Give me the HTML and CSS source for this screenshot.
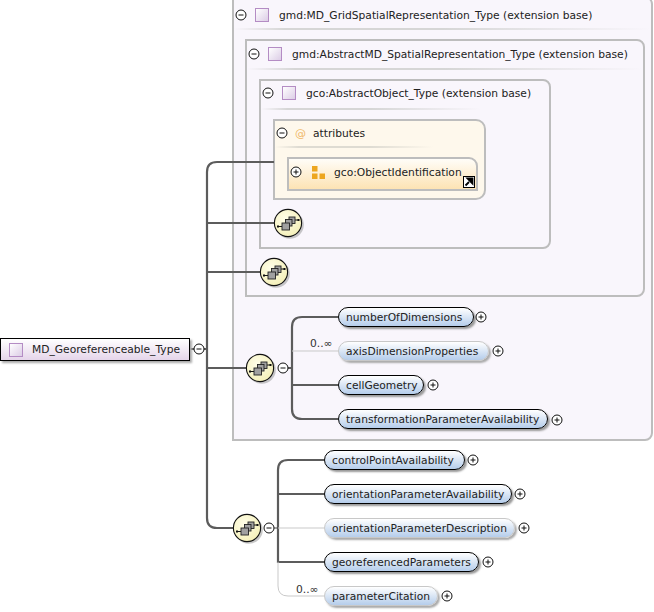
FILE: index.html
```html
<!DOCTYPE html>
<html lang="en">
<head>
<meta charset="utf-8">
<title>MD_Georeferenceable_Type</title>
<link rel="stylesheet" href="styles.css">
</head>
<body>
<svg width="0" height="0" class="defs">
  <defs>
    <radialGradient id="ball" cx="0.4" cy="0.35" r="0.75">
      <stop offset="0" stop-color="#fffee8"/>
      <stop offset="1" stop-color="#f3eeb4"/>
    </radialGradient>
    <symbol id="compositor" viewBox="0 0 32 32">
      <circle cx="16.800" cy="16.800" r="14" fill="#9a9a9a" opacity=".55"/>
      <circle cx="15" cy="15" r="13.600" fill="url(#ball)" stroke="#111" stroke-width="1.100"/>
      <path d="M5 18.500H9M21 12H25" stroke="#111" stroke-width="1"/>
      <rect x="4" y="17.500" width="2" height="2" fill="#111"/>
      <rect x="24.500" y="11" width="2" height="2" fill="#111"/>
      <rect x="16" y="9" width="6" height="6.500" fill="#a0a0a0" stroke="#222" stroke-width=".9"/>
      <rect x="12.500" y="11.500" width="6.500" height="6.500" fill="#a0a0a0" stroke="#222" stroke-width=".9"/>
      <rect x="9" y="15" width="7.500" height="7" fill="#a0a0a0" stroke="#222" stroke-width=".9"/>
    </symbol>
    <symbol id="minus" viewBox="0 0 12 12">
      <circle cx="6" cy="6" r="5" fill="#fff" stroke="#111" stroke-width="1"/>
      <path d="M3.500 6H8.500" stroke="#111" stroke-width="1"/>
    </symbol>
    <symbol id="plus" viewBox="0 0 12 12">
      <circle cx="6" cy="6" r="5" fill="#fff" stroke="#111" stroke-width="1"/>
      <path d="M3.500 6H8.500M6 3.500V8.500" stroke="#111" stroke-width="1"/>
    </symbol>
  </defs>
</svg>

<main class="diagram">
  <section class="panel panel-grid">
    <header class="head">
      <svg class="tog"><use href="#minus"/></svg>
      <span class="type-icon"></span>
      <span class="head-label">gmd:MD_GridSpatialRepresentation_Type (extension base)</span>
    </header>
    <div class="rule rule-grid"></div>
  </section>

  <section class="panel panel-abstract">
    <header class="head">
      <svg class="tog"><use href="#minus"/></svg>
      <span class="type-icon"></span>
      <span class="head-label">gmd:AbstractMD_SpatialRepresentation_Type (extension base)</span>
    </header>
    <div class="rule rule-abstract"></div>
  </section>

  <section class="panel panel-object">
    <header class="head">
      <svg class="tog"><use href="#minus"/></svg>
      <span class="type-icon"></span>
      <span class="head-label">gco:AbstractObject_Type (extension base)</span>
    </header>
    <div class="rule rule-object"></div>
  </section>

  <section class="attrs">
    <header class="attrs-head">
      <svg class="tog"><use href="#minus"/></svg>
      <span class="at">@</span>
      <span class="head-label">attributes</span>
    </header>
    <div class="rule rule-attrs"></div>
    <div class="attr-group">
      <svg class="tog"><use href="#plus"/></svg>
      <svg class="group-icon" viewBox="0 0 13 13"><path d="M0 0h5.500v5.500H0zM0 7.500h5.500v5.500H0zM7.500 7.500h5.500v5.500H7.500z" fill="#eda61f"/></svg>
      <span class="group-label">gco:ObjectIdentification</span>
      <svg class="ref-icon" viewBox="0 0 12 12"><rect x=".5" y=".5" width="11" height="11" fill="#fff" stroke="#000"/><path d="M2.500 9.500L6 6M4.500 2.500H9.500V7.500Z" stroke="#000" stroke-width="1.800" fill="#000"/></svg>
    </div>
  </section>

  <svg class="wires" viewBox="0 0 654 612">
    <g fill="none" stroke="#5c5c5c" stroke-width="2.200">
      <path d="M274 162H217Q207 162 207 172V518Q207 528 217 528H234"/>
      <path d="M207 223H275M207 272H261M207 368H247M190 349H207"/>
      <path d="M338 317H302Q292 317 292 327V409Q292 419 302 419H338M292 385H338M284 368H292"/>
      <path d="M324 460H288Q278 460 278 470V562H324M278 494H324"/>
    </g>
    <g fill="none" stroke="#c9c9c9" stroke-width="1">
      <path d="M292 351H338M278 528H324"/>
      <path d="M278 562V586Q278 596 288 596H324"/>
    </g>
    <path d="M270 528H278" stroke="#444" stroke-width="1"/>
  </svg>

  <div class="root">
    <span class="type-icon"></span>
    <span class="root-label">MD_Georeferenceable_Type</span>
  </div>

  <svg class="tog t-root"><use href="#minus"/></svg>
  <svg class="tog t-seq1"><use href="#minus"/></svg>
  <svg class="tog t-seq2"><use href="#minus"/></svg>

  <svg class="comp c1"><use href="#compositor"/></svg>
  <svg class="comp c2"><use href="#compositor"/></svg>
  <svg class="comp c3"><use href="#compositor"/></svg>
  <svg class="comp c4"><use href="#compositor"/></svg>

  <span class="card card-a">0..∞</span>
  <span class="card card-b">0..∞</span>

  <div class="pill p1">numberOfDimensions</div>
  <svg class="tog x1"><use href="#plus"/></svg>
  <div class="pill opt p2">axisDimensionProperties</div>
  <svg class="tog x2"><use href="#plus"/></svg>
  <div class="pill p3">cellGeometry</div>
  <svg class="tog x3"><use href="#plus"/></svg>
  <div class="pill p4">transformationParameterAvailability</div>
  <svg class="tog x4"><use href="#plus"/></svg>

  <div class="pill p5">controlPointAvailability</div>
  <svg class="tog x5"><use href="#plus"/></svg>
  <div class="pill p6">orientationParameterAvailability</div>
  <svg class="tog x6"><use href="#plus"/></svg>
  <div class="pill opt p7">orientationParameterDescription</div>
  <svg class="tog x7"><use href="#plus"/></svg>
  <div class="pill p8">georeferencedParameters</div>
  <svg class="tog x8"><use href="#plus"/></svg>
  <div class="pill opt p9">parameterCitation</div>
  <svg class="tog x9"><use href="#plus"/></svg>
</main>
</body>
</html>
```
FILE: styles.css
```css
html, body {
  margin: 0;
  padding: 0;
  background: #fff;
}

.defs {
  position: absolute;
}

.diagram {
  position: relative;
  width: 654px;
  height: 612px;
  overflow: hidden;
  font-family: "DejaVu Sans", "Open Sans", sans-serif;
  font-size: 10.7px;
  color: #222;
}

.diagram > * {
  position: absolute;
}

.panel {
  box-sizing: border-box;
  background: #f9f6fc;
  border: 2px solid #bdbdbd;
}

.panel-grid {
  left: 232px;
  top: -4px;
  width: 421px;
  height: 445px;
  border-radius: 0 8px 8px 0;
}

.panel-abstract {
  left: 245px;
  top: 39px;
  width: 400px;
  height: 258px;
  border-radius: 0 8px 8px 0;
}

.panel-object {
  left: 259px;
  top: 79px;
  width: 292px;
  height: 170px;
  border-radius: 0 8px 8px 0;
}

.head {
  display: flex;
  align-items: center;
  height: 20px;
  margin: 3px 0 0 1px;
}

.panel-grid .head {
  margin-top: 7px;
}

.panel-object .head {
  margin-top: 2px;
}

.tog {
  display: block;
  width: 12px;
  height: 12px;
  flex: none;
}

.type-icon {
  display: block;
  box-sizing: border-box;
  width: 14px;
  height: 14px;
  flex: none;
  border: 1px solid #b48cc4;
  background: linear-gradient(135deg, #fff, #dccde6);
}

.head .type-icon {
  margin-left: 8px;
}

.head-label {
  margin-left: 10px;
  white-space: nowrap;
}

.rule {
  height: 2px;
  margin-top: 4px;
  background: linear-gradient(90deg, #f9f6fc, #d6d6d6 12%, #d6d6d6 50%, #f9f6fc);
}

.rule-grid {
  margin-top: 3px;
}

.rule-object {
  width: 220px;
  margin-top: 5px;
}

.attrs {
  box-sizing: border-box;
  left: 273px;
  top: 119px;
  width: 213px;
  height: 81px;
  border: 2px solid #bdbdbd;
  border-radius: 0 10px 10px 0;
  background: #fef8ec;
}

.attrs-head {
  display: flex;
  align-items: center;
  height: 20px;
  margin: 2px 0 0 1px;
}

.at {
  margin-left: 7px;
  color: #f0b868;
  font-size: 11px;
}

.attrs-head .head-label {
  margin-left: 7px;
}

.rule-attrs {
  width: 158px;
  margin-top: 3px;
  background: linear-gradient(90deg, #fef8ec, #dedbd2 15%, #dedbd2 60%, #fef8ec);
}

.attr-group {
  position: relative;
  box-sizing: border-box;
  display: flex;
  align-items: center;
  width: 191px;
  height: 34px;
  margin: 9px 0 0 12px;
  padding: 0 0 4px 1px;
  border: 2px solid #bdbdbd;
  border-radius: 0 9px 0 0;
  background: linear-gradient(180deg, #fffdf8, #fde3b4);
}

.group-icon {
  display: block;
  width: 13px;
  height: 13px;
  margin-left: 10px;
}

.group-label {
  margin-left: 9px;
  white-space: nowrap;
}

.ref-icon {
  position: absolute;
  right: 1px;
  bottom: 1px;
  width: 12px;
  height: 12px;
}

.wires {
  left: 0;
  top: 0;
  width: 654px;
  height: 612px;
}

.root {
  box-sizing: border-box;
  display: flex;
  align-items: center;
  left: 0;
  top: 338px;
  width: 190px;
  height: 23px;
  padding-left: 8px;
  border: 1.5px solid #000;
  background: linear-gradient(180deg, #fff, #e5d5ea);
  box-shadow: 2px 2px 2px #aaa;
}

.root-label {
  margin-left: 9px;
  white-space: nowrap;
}

.pill {
  box-sizing: border-box;
  height: 20px;
  padding: 0 7px;
  line-height: 19px;
  white-space: nowrap;
  border: 1.5px solid #000;
  border-radius: 10px;
  background: linear-gradient(180deg, #fff, #b5cdeb);
  box-shadow: 2px 2px 2px #999;
}

.opt {
  border-color: #c8c8c8;
  box-shadow: 2px 2px 2px #aaa;
}

.card {
  line-height: 12px;
  color: #333;
}

.comp {
  width: 32px;
  height: 32px;
}

.c1 { left: 273px; top: 208px; }
.c2 { left: 259px; top: 257px; }
.c3 { left: 245px; top: 353px; }
.c4 { left: 232px; top: 513px; }

.t-root { left: 193px; top: 343px; }
.t-seq1 { left: 277px; top: 362px; }
.t-seq2 { left: 263px; top: 522px; }

.card-a { left: 310px; top: 338px; }
.card-b { left: 296px; top: 584px; }

.p1 { left: 338px; top: 307px; width: 136px; }
.p2 { left: 338px; top: 341px; width: 151px; }
.p3 { left: 338px; top: 375px; width: 86px; }
.p4 { left: 338px; top: 409px; width: 210px; }
.p5 { left: 324px; top: 450px; width: 141px; }
.p6 { left: 324px; top: 484px; width: 188px; }
.p7 { left: 324px; top: 518px; width: 191px; }
.p8 { left: 324px; top: 552px; width: 155px; }
.p9 { left: 324px; top: 586px; width: 114px; }

.x1 { left: 475px; top: 311px; }
.x2 { left: 492px; top: 345px; }
.x3 { left: 427px; top: 379px; }
.x4 { left: 551px; top: 414px; }
.x5 { left: 467px; top: 454px; }
.x6 { left: 514px; top: 488px; }
.x7 { left: 518px; top: 522px; }
.x8 { left: 482px; top: 556px; }
.x9 { left: 441px; top: 590px; }
```
